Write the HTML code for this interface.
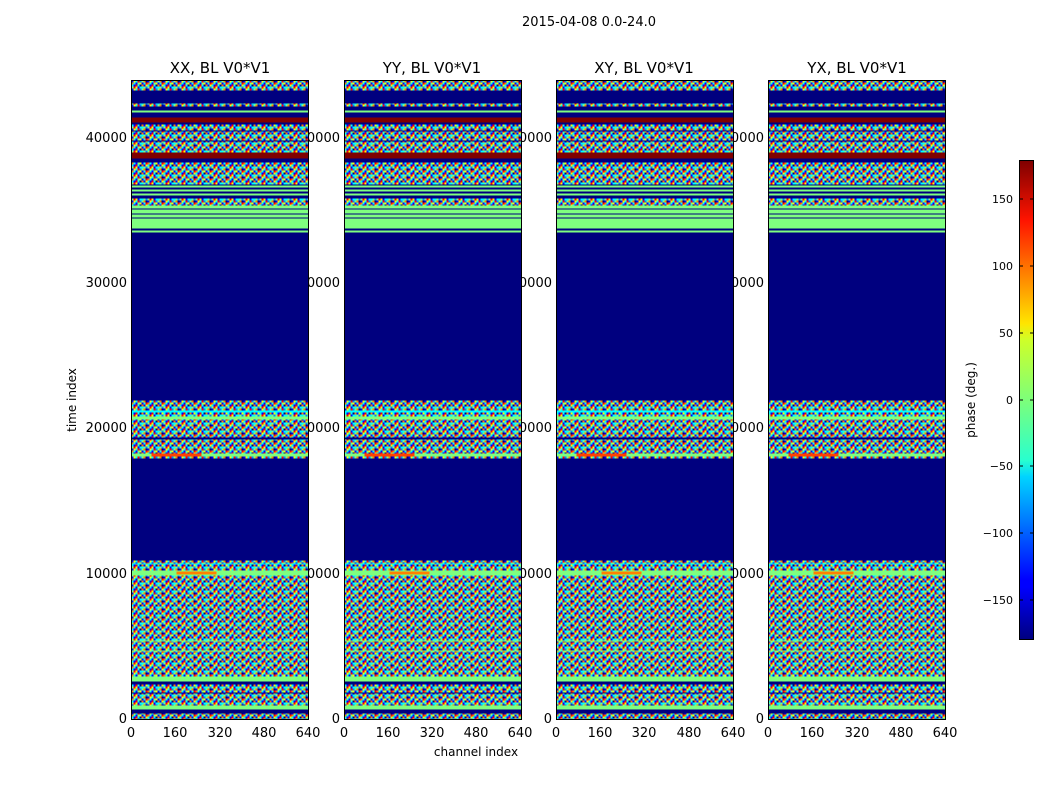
<!DOCTYPE html>
<html><head><meta charset="utf-8"><style>
html,body{margin:0;padding:0;background:#fff}
svg{display:block;font-family:"DejaVu Sans","Liberation Sans",sans-serif}
</style></head><body>
<svg width="1050" height="800" viewBox="0 0 1050 800" xmlns="http://www.w3.org/2000/svg">
<defs>
<pattern id="nz" width="16" height="8" patternUnits="userSpaceOnUse">
<rect width="16" height="8" fill="#7fff7f"/>
<rect x="0" y="0" width="2" height="2" fill="#0000ff"/><rect x="2" y="0" width="2" height="2" fill="#ffff00"/>
<rect x="4" y="0" width="2" height="2" fill="#00ffff"/><rect x="6" y="0" width="2" height="2" fill="#ff0000"/>
<rect x="8" y="0" width="2" height="2" fill="#0080ff"/><rect x="10" y="0" width="2" height="2" fill="#7fff7f"/>
<rect x="12" y="0" width="2" height="2" fill="#ff8000"/><rect x="14" y="0" width="2" height="2" fill="#00007f"/>
<rect x="0" y="2" width="2" height="2" fill="#ff8000"/><rect x="2" y="2" width="2" height="2" fill="#00ffff"/>
<rect x="4" y="2" width="2" height="2" fill="#0000ff"/><rect x="6" y="2" width="2" height="2" fill="#7fff7f"/>
<rect x="8" y="2" width="2" height="2" fill="#ffff00"/><rect x="10" y="2" width="2" height="2" fill="#0000ff"/>
<rect x="12" y="2" width="2" height="2" fill="#00ffff"/><rect x="14" y="2" width="2" height="2" fill="#ff0000"/>
<rect x="0" y="4" width="2" height="2" fill="#00ffff"/><rect x="2" y="4" width="2" height="2" fill="#0000ff"/>
<rect x="4" y="4" width="2" height="2" fill="#ff0000"/><rect x="6" y="4" width="2" height="2" fill="#00ffff"/>
<rect x="8" y="4" width="2" height="2" fill="#00007f"/><rect x="10" y="4" width="2" height="2" fill="#ff8000"/>
<rect x="12" y="4" width="2" height="2" fill="#0000ff"/><rect x="14" y="4" width="2" height="2" fill="#ffff00"/>
<rect x="0" y="6" width="2" height="2" fill="#7fff7f"/><rect x="2" y="6" width="2" height="2" fill="#ff0000"/>
<rect x="4" y="6" width="2" height="2" fill="#ffff00"/><rect x="6" y="6" width="2" height="2" fill="#0000ff"/>
<rect x="8" y="6" width="2" height="2" fill="#00ffff"/><rect x="10" y="6" width="2" height="2" fill="#00ffff"/>
<rect x="12" y="6" width="2" height="2" fill="#7fff7f"/><rect x="14" y="6" width="2" height="2" fill="#0080ff"/>
</pattern>
<linearGradient id="jet" x1="0" y1="1" x2="0" y2="0">
<stop offset="0" stop-color="#00007f"/><stop offset="0.11" stop-color="#0000ff"/>
<stop offset="0.125" stop-color="#0000ff"/><stop offset="0.34" stop-color="#00d4ff"/>
<stop offset="0.375" stop-color="#29ffce"/><stop offset="0.5" stop-color="#7dff7a"/>
<stop offset="0.625" stop-color="#ceff29"/><stop offset="0.66" stop-color="#ffe500"/>
<stop offset="0.875" stop-color="#ff1400"/><stop offset="1" stop-color="#7f0000"/>
</linearGradient>
<g id="panel">
<rect x="0" y="0" width="177" height="639" fill="#00007f"/>
<rect x="0" y="0" width="177" height="10" fill="url(#nz)"/>
<rect x="0" y="23" width="177" height="3" fill="url(#nz)"/>
<rect x="0" y="30" width="177" height="2" fill="#7fff7f"/>
<rect x="0" y="37" width="177" height="5" fill="#7f0000"/>
<rect x="0" y="44" width="177" height="28" fill="url(#nz)"/>
<rect x="0" y="50" width="177" height="1" fill="#00007f"/>
<rect x="0" y="60" width="177" height="1" fill="#00007f"/>
<rect x="0" y="72" width="177" height="6" fill="#7f0000"/>
<rect x="0" y="82" width="177" height="22" fill="url(#nz)"/>
<rect x="0" y="105" width="177" height="2" fill="#7fff7f"/>
<rect x="0" y="109" width="177" height="2" fill="#7fff7f"/>
<rect x="0" y="113" width="177" height="2" fill="#7fff7f"/>
<rect x="0" y="118" width="177" height="7" fill="url(#nz)"/>
<rect x="0" y="125" width="177" height="3" fill="#7fff7f"/>
<rect x="0" y="129" width="177" height="4" fill="#7fff7f"/>
<rect x="0" y="134" width="177" height="3" fill="#7fff7f"/>
<rect x="0" y="138" width="177" height="10" fill="#7fff7f"/>
<rect x="0" y="150" width="177" height="2" fill="#7fff7f"/>
<rect x="0" y="320" width="177" height="58" fill="url(#nz)"/>
<rect x="0" y="330" width="177" height="2" fill="#00ffff"/>
<rect x="0" y="336" width="177" height="3" fill="#7fff7f"/>
<rect x="0" y="357" width="177" height="2" fill="#00007f"/>
<rect x="0" y="373" width="177" height="3" fill="#7fff7f"/>
<rect x="20" y="373" width="50" height="3" fill="#ff4000"/>
<rect x="0" y="480" width="177" height="117" fill="url(#nz)"/>
<rect x="0" y="483" width="177" height="1" fill="#00ffff"/>
<rect x="0" y="490" width="177" height="5" fill="#7fff7f"/>
<rect x="45" y="491" width="40" height="3" fill="#ff8000"/>
<rect x="0" y="560" width="177" height="1" fill="#7fff7f"/>
<rect x="0" y="570" width="177" height="1" fill="#7fff7f"/>
<rect x="0" y="596" width="177" height="5" fill="#7fff7f"/>
<rect x="0" y="604" width="177" height="22" fill="url(#nz)"/>
<rect x="0" y="612" width="177" height="1" fill="#00007f"/>
<rect x="0" y="625" width="177" height="4" fill="#7fff7f"/>
<rect x="0" y="633" width="177" height="6" fill="url(#nz)"/>
<rect x="0" y="0" width="177" height="639" fill="none" stroke="#000" stroke-width="1"/>
</g>
</defs>
<text x="589" y="26" font-size="13" text-anchor="middle">2015-04-08 0.0-24.0</text>
<g font-size="13" text-anchor="end">
<text x="127" y="723">0</text><text x="127" y="578">10000</text><text x="127" y="432">20000</text><text x="127" y="287">30000</text><text x="127" y="142">40000</text>
<text x="340" y="723">0</text><text x="340" y="578">10000</text><text x="340" y="432">20000</text><text x="340" y="287">30000</text><text x="340" y="142">40000</text>
<text x="552" y="723">0</text><text x="552" y="578">10000</text><text x="552" y="432">20000</text><text x="552" y="287">30000</text><text x="552" y="142">40000</text>
<text x="764" y="723">0</text><text x="764" y="578">10000</text><text x="764" y="432">20000</text><text x="764" y="287">30000</text><text x="764" y="142">40000</text>
</g>
<use href="#panel" x="131.5" y="80.5"/>
<use href="#panel" x="344.5" y="80.5"/>
<use href="#panel" x="556.5" y="80.5"/>
<use href="#panel" x="768.5" y="80.5"/>
<g font-size="15" text-anchor="middle">
<text x="220" y="73">XX, BL V0*V1</text><text x="432" y="73">YY, BL V0*V1</text>
<text x="644" y="73">XY, BL V0*V1</text><text x="857" y="73">YX, BL V0*V1</text>
</g>
<g font-size="13" text-anchor="middle">
<text x="131" y="737">0</text><text x="175" y="737">160</text><text x="220" y="737">320</text><text x="264" y="737">480</text><text x="308" y="737">640</text>
<text x="344" y="737">0</text><text x="388" y="737">160</text><text x="432" y="737">320</text><text x="476" y="737">480</text><text x="520" y="737">640</text>
<text x="556" y="737">0</text><text x="600" y="737">160</text><text x="644" y="737">320</text><text x="689" y="737">480</text><text x="733" y="737">640</text>
<text x="768" y="737">0</text><text x="812" y="737">160</text><text x="857" y="737">320</text><text x="901" y="737">480</text><text x="945" y="737">640</text>
</g>
<text x="476" y="756" font-size="12" text-anchor="middle">channel index</text>
<text transform="translate(76,400) rotate(-90)" font-size="12" text-anchor="middle">time index</text>
<rect x="1019.5" y="160.5" width="14" height="479" fill="url(#jet)" stroke="#000"/>
<g stroke="#000">
<line x1="1019" y1="199" x2="1023" y2="199"/><line x1="1030" y1="199" x2="1034" y2="199"/>
<line x1="1019" y1="266" x2="1023" y2="266"/><line x1="1030" y1="266" x2="1034" y2="266"/>
<line x1="1019" y1="333" x2="1023" y2="333"/><line x1="1030" y1="333" x2="1034" y2="333"/>
<line x1="1019" y1="400" x2="1023" y2="400"/><line x1="1030" y1="400" x2="1034" y2="400"/>
<line x1="1019" y1="466" x2="1023" y2="466"/><line x1="1030" y1="466" x2="1034" y2="466"/>
<line x1="1019" y1="533" x2="1023" y2="533"/><line x1="1030" y1="533" x2="1034" y2="533"/>
<line x1="1019" y1="600" x2="1023" y2="600"/><line x1="1030" y1="600" x2="1034" y2="600"/>
</g>
<g font-size="11" text-anchor="end">
<text x="1013" y="203">150</text><text x="1013" y="270">100</text><text x="1013" y="337">50</text>
<text x="1013" y="404">0</text><text x="1013" y="470">−50</text><text x="1013" y="537">−100</text><text x="1013" y="604">−150</text>
</g>
<text transform="translate(975,400) rotate(-90)" font-size="12" text-anchor="middle">phase (deg.)</text>
</svg>
</body></html>
